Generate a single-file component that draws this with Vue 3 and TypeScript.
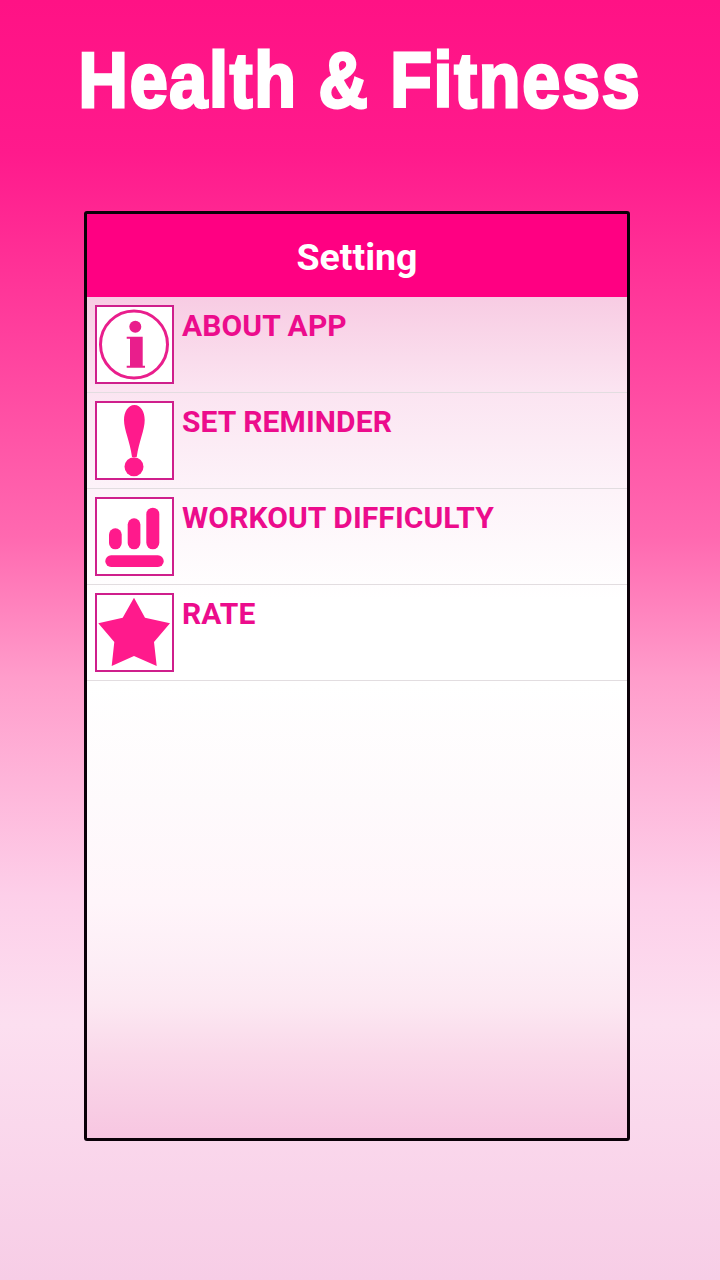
<template>
  <div class="screen">
    <h1 class="app-title">Health &amp; Fitness</h1>
    <div class="panel">
      <div class="panel-header">Setting</div>
      <div class="panel-body">
        <div v-for="item in items" :key="item.label" class="row">
          <div class="icon-box">
            <svg v-if="item.icon === 'info'" viewBox="0 0 75 75" class="icon">
              <circle cx="37" cy="37.5" r="33.5" fill="none" stroke="#e91e8c" stroke-width="3" />
              <circle cx="38.3" cy="19.7" r="6" fill="#e91e8c" />
              <path d="M29.7 29.7H45.7V58.7H48V60.7H29.7V58.7H33V31.7H29.7Z" fill="#e91e8c" />
            </svg>
            <svg v-else-if="item.icon === 'alert'" viewBox="0 0 75 75" class="icon">
              <path d="M37.4 2C44 2 47.7 9 47.7 17C47.7 27 42 38 39.7 54H35C33 38 27 27 27 17C27 9 31 2 37.4 2Z" fill="#ff1a8c" />
              <circle cx="37" cy="63.7" r="9.5" fill="#ff1a8c" />
            </svg>
            <svg v-else-if="item.icon === 'level'" viewBox="0 0 75 75" class="icon">
              <rect x="12" y="29.3" width="12.7" height="21" rx="6.3" fill="#ff1a8c" />
              <rect x="30.7" y="19.3" width="12.7" height="31" rx="6.3" fill="#ff1a8c" />
              <rect x="49.3" y="8.7" width="13" height="41.6" rx="6.5" fill="#ff1a8c" />
              <rect x="8.3" y="56.3" width="58.4" height="11.7" rx="5.8" fill="#ff1a8c" />
            </svg>
            <svg v-else viewBox="0 0 75 75" class="icon">
              <path d="M37 2.7L48 22.7L73 28.3L57 47L59.7 71L37 61L14.7 71L17.3 47L1.3 28.3L25.7 22.7Z" fill="#ff1a8c" />
            </svg>
          </div>
          <span class="row-label">{{ item.label }}</span>
        </div>
      </div>
    </div>
  </div>
</template>

<script setup lang="ts">
interface SettingItem {
  label: string
  icon: 'info' | 'alert' | 'level' | 'star'
}

const items: SettingItem[] = [
  { label: 'ABOUT APP', icon: 'info' },
  { label: 'SET REMINDER', icon: 'alert' },
  { label: 'WORKOUT DIFFICULTY', icon: 'level' },
  { label: 'RATE', icon: 'star' }
]
</script>

<style>
html,
body {
  margin: 0;
  padding: 0;
}
</style>

<style scoped>
.screen {
  width: 720px;
  height: 1280px;
  box-sizing: border-box;
  padding-top: 30px;
  overflow: hidden;
  background: linear-gradient(180deg, #ff1285 0%, #ff1a8c 12%, #ff69b0 42%, #ff9dcb 53%, #fdcfe9 70%, #fcdff0 80%, #f7cde6 100%);
}

.app-title {
  margin: 0;
  height: 100px;
  text-align: center;
  font-family: "Liberation Sans", Arial, sans-serif;
  font-size: 78px;
  line-height: 100px;
  font-weight: 700;
  letter-spacing: 2px;
  white-space: nowrap;
  color: #fff;
  -webkit-text-stroke: 3px #fff;
  transform: scaleX(0.875);
}

.panel {
  box-sizing: border-box;
  width: 546px;
  height: 930px;
  margin: 81px 0 0 84px;
  border: 3px solid #0a0008;
  border-radius: 3px;
  display: flex;
  flex-direction: column;
  overflow: hidden;
}

.panel-header {
  box-sizing: border-box;
  height: 83px;
  flex: none;
  background: #ff0082;
  color: #fff;
  display: flex;
  align-items: center;
  justify-content: center;
  font-family: Roboto, sans-serif;
  font-size: 37.5px;
  font-weight: 700;
  padding-top: 2px;
}

.panel-body {
  flex: 1;
  background: linear-gradient(180deg, #f8cce3 0%, #fbe4f1 11%, #fdf3f9 23%, #fff 36%, #fff 46%, #fefafc 60%, #fff5fa 72%, #fdeef6 79%, #fce8f2 84%, #fad9ea 90%, #f7c6e1 100%);
}

.row {
  box-sizing: border-box;
  height: 96px;
  display: flex;
  align-items: flex-start;
  gap: 8px;
  padding: 8px 0 0 8px;
  border-bottom: 1px solid #e2dde0;
}

.icon-box {
  box-sizing: border-box;
  width: 79px;
  height: 79px;
  flex: none;
  background: #fff;
  border: 2px solid #cf1f8c;
}

.icon {
  display: block;
  width: 75px;
  height: 75px;
}

.row-label {
  font-family: Roboto, sans-serif;
  font-size: 30px;
  line-height: 42px;
  font-weight: 700;
  letter-spacing: 0.1px;
  color: #ec0c8c;
}
</style>
